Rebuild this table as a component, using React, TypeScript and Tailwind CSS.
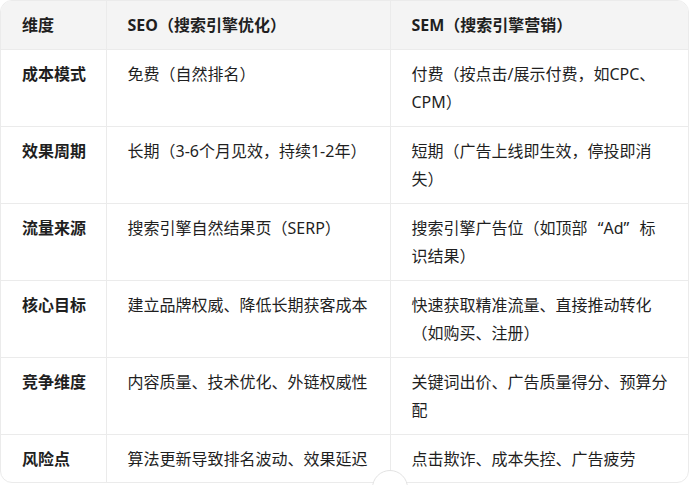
import type { ReactNode } from "react";

const rows: [string, ReactNode, ReactNode][] = [
  ["成本模式", "免费（自然排名）", "付费（按点击/展示付费，如CPC、CPM）"],
  ["效果周期", "长期（3-6个月见效，持续1-2年）", "短期（广告上线即生效，停投即消失）"],
  [
    "流量来源",
    "搜索引擎自然结果页（SERP）",
    <>
      搜索引擎广告位（如顶部<span className="inline-block w-4 text-right">“</span>Ad
      <span className="inline-block w-4 text-left">”</span>标识结果）
    </>,
  ],
  ["核心目标", "建立品牌权威、降低长期获客成本", "快速获取精准流量、直接推动转化（如购买、注册）"],
  ["竞争维度", "内容质量、技术优化、外链权威性", "关键词出价、广告质量得分、预算分配"],
  ["风险点", "算法更新导致排名波动、效果延迟", "点击欺诈、成本失控、广告疲劳"],
];

export default function App() {
  return (
    <div
      className="relative h-[485px] w-[689px] overflow-hidden bg-white text-[16px] leading-[28px] text-[#1f1f1f]"
      style={{ fontFamily: '"Noto Sans", "Noto Sans CJK SC", sans-serif' }}
    >
      <div className="h-[483px] w-[689px] overflow-hidden rounded-[12px] border border-[#ebebeb]">
        <table className="w-full table-fixed border-collapse">
          <colgroup>
            <col className="w-[105px]" />
            <col className="w-[284px]" />
            <col />
          </colgroup>
          <thead>
            <tr className="bg-[#f4f4f4]">
              <th className="whitespace-nowrap py-[10px] pl-[21px] pr-2 text-left font-bold">维度</th>
              <th className="border-l border-[#ebebeb] py-[10px] pl-[21px] pr-4 text-left font-bold">
                SEO（搜索引擎优化）
              </th>
              <th className="border-l border-[#ebebeb] py-[10px] pl-[21px] pr-5 text-left font-bold">
                SEM（搜索引擎营销）
              </th>
            </tr>
          </thead>
          <tbody>
            {rows.map((r) => (
              <tr key={r[0]} className="border-t border-[#ebebeb] align-top">
                <td className="whitespace-nowrap py-[10px] pl-[21px] pr-2 font-bold">{r[0]}</td>
                <td className="border-l border-[#ebebeb] py-[10px] pl-[21px] pr-4">{r[1]}</td>
                <td className="border-l border-[#ebebeb] py-[10px] pl-[21px] pr-5">{r[2]}</td>
              </tr>
            ))}
          </tbody>
        </table>
      </div>
      <div className="absolute left-[372px] top-[470px] h-9 w-9 rounded-full border border-[#e3e3e3] bg-white" />
    </div>
  );
}
